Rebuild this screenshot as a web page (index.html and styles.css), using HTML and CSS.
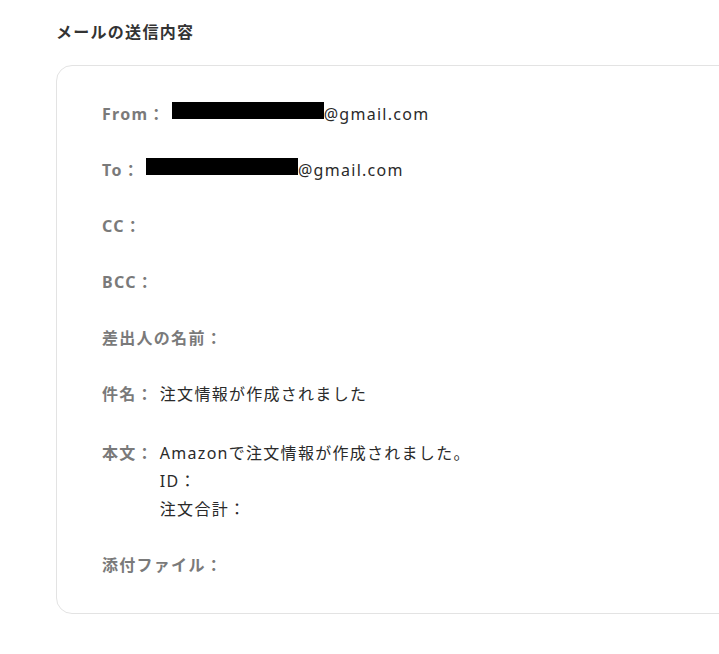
FILE: index.html
```
<!DOCTYPE html>
<html>
<head>
    <title>メールの送信内容</title>
    <link rel="stylesheet" href="styles.css">
</head>
<body>
    <div class="section">
        <h2>メールの送信内容</h2>
        <div class="card">
            <div class="row">
                <span class="label">From：</span>
                <span class="value"><span class="mask">y</span>@gmail.com</span>
            </div>
            <div class="row">
                <span class="label">To：</span>
                <span class="value"><span class="mask">y</span>@gmail.com</span>
            </div>
            <div class="row">
                <span class="label">CC：</span>
            </div>
            <div class="row">
                <span class="label">BCC：</span>
            </div>
            <div class="row">
                <span class="label">差出人の名前：</span>
            </div>
            <div class="row">
                <span class="label">件名：</span>
                <span class="value">注文情報が作成されました</span>
            </div>
            <div class="row body-row">
                <span class="label">本文：</span>
                <span class="value">Amazonで注文情報が作成されました。<br>ID：<br>注文合計：</span>
            </div>
            <div class="row">
                <span class="label">添付ファイル：</span>
            </div>
        </div>
    </div>
</body>
</html>
```
FILE: styles.css
```
body {
    font-family: "Noto Sans", "Noto Sans CJK JP", sans-serif;
    background-color: #ffffff;
    margin: 0;
    overflow: hidden;
    letter-spacing: 0.08em;
}

.section {
    padding: 20px 0 0 56px;
}

h2 {
    margin: 0;
    font-size: 16px;
    line-height: 24px;
    font-weight: bold;
    color: #333;
}

.card {
    margin-top: 21px;
    width: 720px;
    border: 1px solid #e3e3e3;
    border-radius: 16px;
    padding: 34px 0 34px 45px;
    display: flex;
    flex-direction: column;
    gap: 28px;
}

.row {
    display: flex;
    font-size: 16px;
    line-height: 28px;
}

.body-row {
    margin-top: 3px;
}

.label {
    color: #7a7a7a;
    font-weight: bold;
    white-space: nowrap;
}

.value {
    color: #2a2a2a;
    margin-left: 6px;
}

.mask {
    display: inline-block;
    width: 152px;
    height: 17px;
    background-color: #000;
    color: transparent;
    vertical-align: -2px;
}
```
